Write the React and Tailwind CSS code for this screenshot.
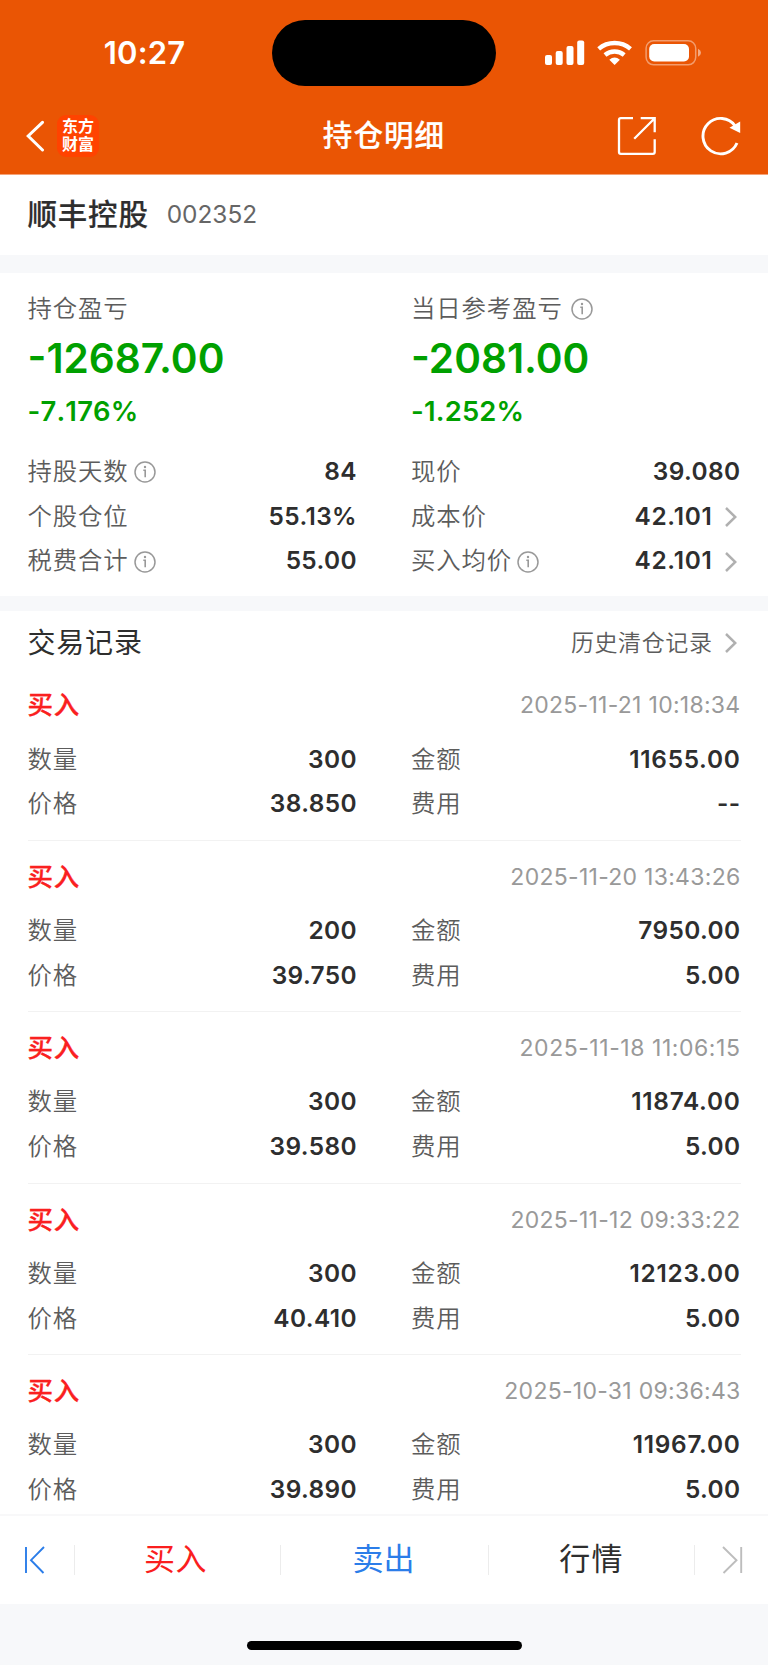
import React from 'react';

const trades = [
  { time: '2025-11-21 10:18:34', qty: '300', amount: '11655.00', price: '38.850', fee: '--' },
  { time: '2025-11-20 13:43:26', qty: '200', amount: '7950.00', price: '39.750', fee: '5.00' },
  { time: '2025-11-18 11:06:15', qty: '300', amount: '11874.00', price: '39.580', fee: '5.00' },
  { time: '2025-11-12 09:33:22', qty: '300', amount: '12123.00', price: '40.410', fee: '5.00' },
  { time: '2025-10-31 09:36:43', qty: '300', amount: '11967.00', price: '39.890', fee: '5.00' },
];

const countOnes = (text) => text.split('1').length - 1;

function InfoIcon({ className = '' }) {
  return (
    <svg className={`h-[22px] w-[22px] shrink-0 ${className}`} viewBox="0 0 22 22" fill="none" stroke="#999">
      <circle cx="11" cy="11" r="10" strokeWidth="1.5" />
      <path d="M9.3 9.2H11.2V16.2" strokeWidth="1.6" />
      <circle cx="11" cy="6" r="1.2" fill="#999" stroke="none" />
    </svg>
  );
}

function Chevron() {
  return (
    <svg className="ml-[12px] mr-[4px] h-[22px] w-[12px] shrink-0" viewBox="0 0 12 22" fill="none" stroke="#b0b0b0" strokeWidth="2.5">
      <path d="M1 2L10.3 11L1 20" />
    </svg>
  );
}

function Row({ label, value, info, arrow }) {
  const tracking = countOnes(value) > 1 ? 'tracking-[0.7px]' : 'tracking-[0.4px]';
  return (
    <div className="flex h-[44.7px] items-center">
      <span className="pb-[2px] text-[24.4px] font-[350] tracking-[0.9px] text-[#5c5c5c]">{label}</span>
      {info && <InfoIcon className="ml-[5px]" />}
      <span className={`ml-auto pb-[2px] text-[24.4px] font-semibold text-[#2e2e2e] ${tracking}`}>{value}</span>
      {arrow && <Chevron />}
    </div>
  );
}

function Summary({ label, info, total, percent, children }) {
  return (
    <div>
      <div className="flex h-[44px] items-center">
        <span className="pb-[1px] text-[24.4px] font-[350] tracking-[0.9px] text-[#5c5c5c]">{label}</span>
        {info && <InfoIcon className="ml-[8px]" />}
      </div>
      <div className="flex h-[57px] items-center text-[40.6px] font-semibold text-[#00a000]">{total}</div>
      <div className="flex h-[47px] items-center text-[27.4px] font-semibold tracking-[0.2px] text-[#00a000] [font-kerning:none]">{percent}</div>
      <div className="mt-[15px]">{children}</div>
    </div>
  );
}

function Trade({ trade, last }) {
  const tracking = countOnes(trade.time) > 5 ? 'tracking-[0.55px]' : 'tracking-[0.28px]';
  return (
    <div className={`h-[171.45px] ${last ? '' : 'border-b border-[#f2f2f2]'}`}>
      <div className="flex h-[62px] items-center justify-between pt-[10px]">
        <span className="text-[25.5px] font-medium tracking-[0.7px] text-[#fa2020] [-webkit-text-stroke:0.3px]">买入</span>
        <span className={`text-[23px] text-[#999] ${tracking}`}>{trade.time}</span>
      </div>
      <div className="mt-[6px] grid grid-cols-2 gap-x-[54px]">
        <Row label="数量" value={trade.qty} />
        <Row label="金额" value={trade.amount} />
        <Row label="价格" value={trade.price} />
        <Row label="费用" value={trade.fee} />
      </div>
    </div>
  );
}

function StatusBar() {
  return (
    <div className="flex h-[106px] items-center text-white">
      <div className="flex w-[272px] justify-center pl-[17px] text-[31px] font-semibold tracking-[0.2px]">10:27</div>
      <div className="h-[66px] w-[224px] shrink-0 rounded-full bg-black" />
      <svg className="ml-[49px] h-[26px] w-[158px]" viewBox="545 39 158 26" fill="#fff">
        <rect x="545" y="54" width="7" height="10" rx="2" />
        <rect x="555.7" y="50" width="7" height="14" rx="2" />
        <rect x="566.5" y="45" width="7" height="19" rx="2" />
        <rect x="577.2" y="39.5" width="7" height="24.5" rx="2" />
        <g fill="none" stroke="#fff" strokeWidth="4.4">
          <path d="M598.7 47.9A24.5 24.5 0 0 1 630.5 47.9" />
          <path d="M605 54A14.8 14.8 0 0 1 624.2 54" />
        </g>
        <path d="M609.3 58.8Q614.6 54.2 619.9 58.8L614.6 64Z" />
        <rect x="646.1" y="39.8" width="49.6" height="24" rx="7.5" fill="none" stroke="#fff" strokeOpacity=".42" strokeWidth="1.5" />
        <rect x="649.2" y="43" width="39.8" height="17.4" rx="5" />
        <path d="M698 47.8Q701 49.2 701 51.8Q701 54.4 698 55.8Z" fillOpacity=".5" />
      </svg>
    </div>
  );
}

function NavBar() {
  return (
    <div className="flex h-[68px] items-center pb-[9px] text-white">
      <div className="flex flex-1 items-center pl-[26px]">
        <svg className="h-[32px] w-[19px]" viewBox="0 0 19 32" fill="none" stroke="#fff" strokeWidth="3" strokeLinecap="round">
          <path d="M16.5 2.3L2.2 16L16.5 30" />
        </svg>
        <div className="ml-[12px] flex h-[42px] w-[42px] flex-col items-center justify-center rounded-[9px] bg-[#ff4300] text-[16px] font-bold leading-[17.5px]">
          <span>东方</span>
          <span>财富</span>
        </div>
      </div>
      <div className="pl-[1px] text-[29.5px] font-medium tracking-[1.1px] [-webkit-text-stroke:0.2px]">持仓明细</div>
      <div className="flex flex-1 items-center justify-end pr-[27px]">
        <svg className="h-[40px] w-[40px]" viewBox="616 116 40 40" fill="none" stroke="#fff" strokeWidth="2.3">
          <path d="M633 118.2H620.8Q619 118.2 619 120V152Q619 153.9 620.8 153.9H652.8Q654.7 153.9 654.7 152V139.2" />
          <path d="M640.7 118.2H654.7V132.2M634.2 138.8L654.5 118.5" />
        </svg>
        <svg className="ml-[44px] h-[40px] w-[41px]" viewBox="700 116 41 40" fill="none" stroke="#fff" strokeWidth="2.9">
          <path d="M737 143A17.7 17.7 0 1 1 735.2 126" />
          <path d="M729.5 127.7L740.2 121.5V133Z" fill="#fff" stroke="none" />
        </svg>
      </div>
    </div>
  );
}

function TabBar() {
  return (
    <div className="flex h-[90px] items-center border-t-2 border-[#f8f8f9] bg-white text-[31px]">
      <div className="flex h-[30px] w-[75px] items-center border-r border-[#ececec] pl-[24px]">
        <svg className="h-[28px] w-[22px]" viewBox="0 0 22 28" fill="none" stroke="#2b7de9" strokeWidth="1.9">
          <path d="M2 1V27M20 1L7 14.2L19.5 27" />
        </svg>
      </div>
      <div className="flex h-[30px] w-[206px] items-center justify-center border-r border-[#ececec] pr-[4px] tracking-[0.6px] text-[#fa1e1e]">买入</div>
      <div className="flex h-[30px] w-[208px] items-center justify-center border-r border-[#ececec] pr-[2px] text-[#2b7de9]">卖出</div>
      <div className="flex h-[30px] w-[206px] items-center justify-center border-r border-[#ececec] tracking-[1.2px] text-[#2e2e2e]">行情</div>
      <div className="flex flex-1 pl-[27px]">
        <svg className="h-[28px] w-[22px]" viewBox="0 0 22 28" fill="none" stroke="#bdbdbd" strokeWidth="1.9">
          <path d="M1 1L14.5 14.2L1.5 27M19.2 1V27" />
        </svg>
      </div>
    </div>
  );
}

export default function App() {
  return (
    <div className="flex h-[1665px] w-[768px] flex-col overflow-hidden bg-[#f7f8fa] font-['Inter','Noto_Sans_CJK_SC',sans-serif] whitespace-nowrap">
      <header className="h-[175px] shrink-0 border-b border-[#f5a277] bg-[#ea5504]">
        <StatusBar />
        <NavBar />
      </header>

      <section className="flex h-[80px] shrink-0 items-center bg-white px-[27.5px]">
        <h1 className="pb-[2px] text-[29.5px] font-medium tracking-[0.8px] text-[#2e2e2e] [-webkit-text-stroke:0.2px]">顺丰控股</h1>
        <span className="ml-[18px] pb-[2px] text-[24.4px] text-[#666]">002352</span>
      </section>

      <section className="mt-[18px] grid h-[323px] shrink-0 grid-cols-2 gap-x-[54px] bg-white px-[27.5px] pt-[14px]">
        <Summary label="持仓盈亏" total="-12687.00" percent="-7.176%">
          <Row label="持股天数" value="84" info />
          <Row label="个股仓位" value="55.13%" />
          <Row label="税费合计" value="55.00" info />
        </Summary>
        <Summary label="当日参考盈亏" total="-2081.00" percent="-1.252%" info>
          <Row label="现价" value="39.080" />
          <Row label="成本价" value="42.101" arrow />
          <Row label="买入均价" value="42.101" info arrow />
        </Summary>
      </section>

      <section className="mt-[14.5px] h-[903px] shrink-0 overflow-hidden bg-white px-[27.5px]">
        <div className="flex h-[59px] items-center justify-between pt-[6px]">
          <h2 className="text-[28px] tracking-[0.8px] text-[#2e2e2e]">交易记录</h2>
          <div className="flex items-center">
            <span className="text-[23px] font-[350] tracking-[0.6px] text-[#5c5c5c]">历史清仓记录</span>
            <Chevron />
          </div>
        </div>
        {trades.map((trade, i) => (
          <Trade key={trade.time} trade={trade} last={i === trades.length - 1} />
        ))}
      </section>

      <TabBar />
      <footer className="flex flex-1 items-end justify-center pb-[15px]">
        <div className="h-[9px] w-[275px] rounded-full bg-black" />
      </footer>
    </div>
  );
}
